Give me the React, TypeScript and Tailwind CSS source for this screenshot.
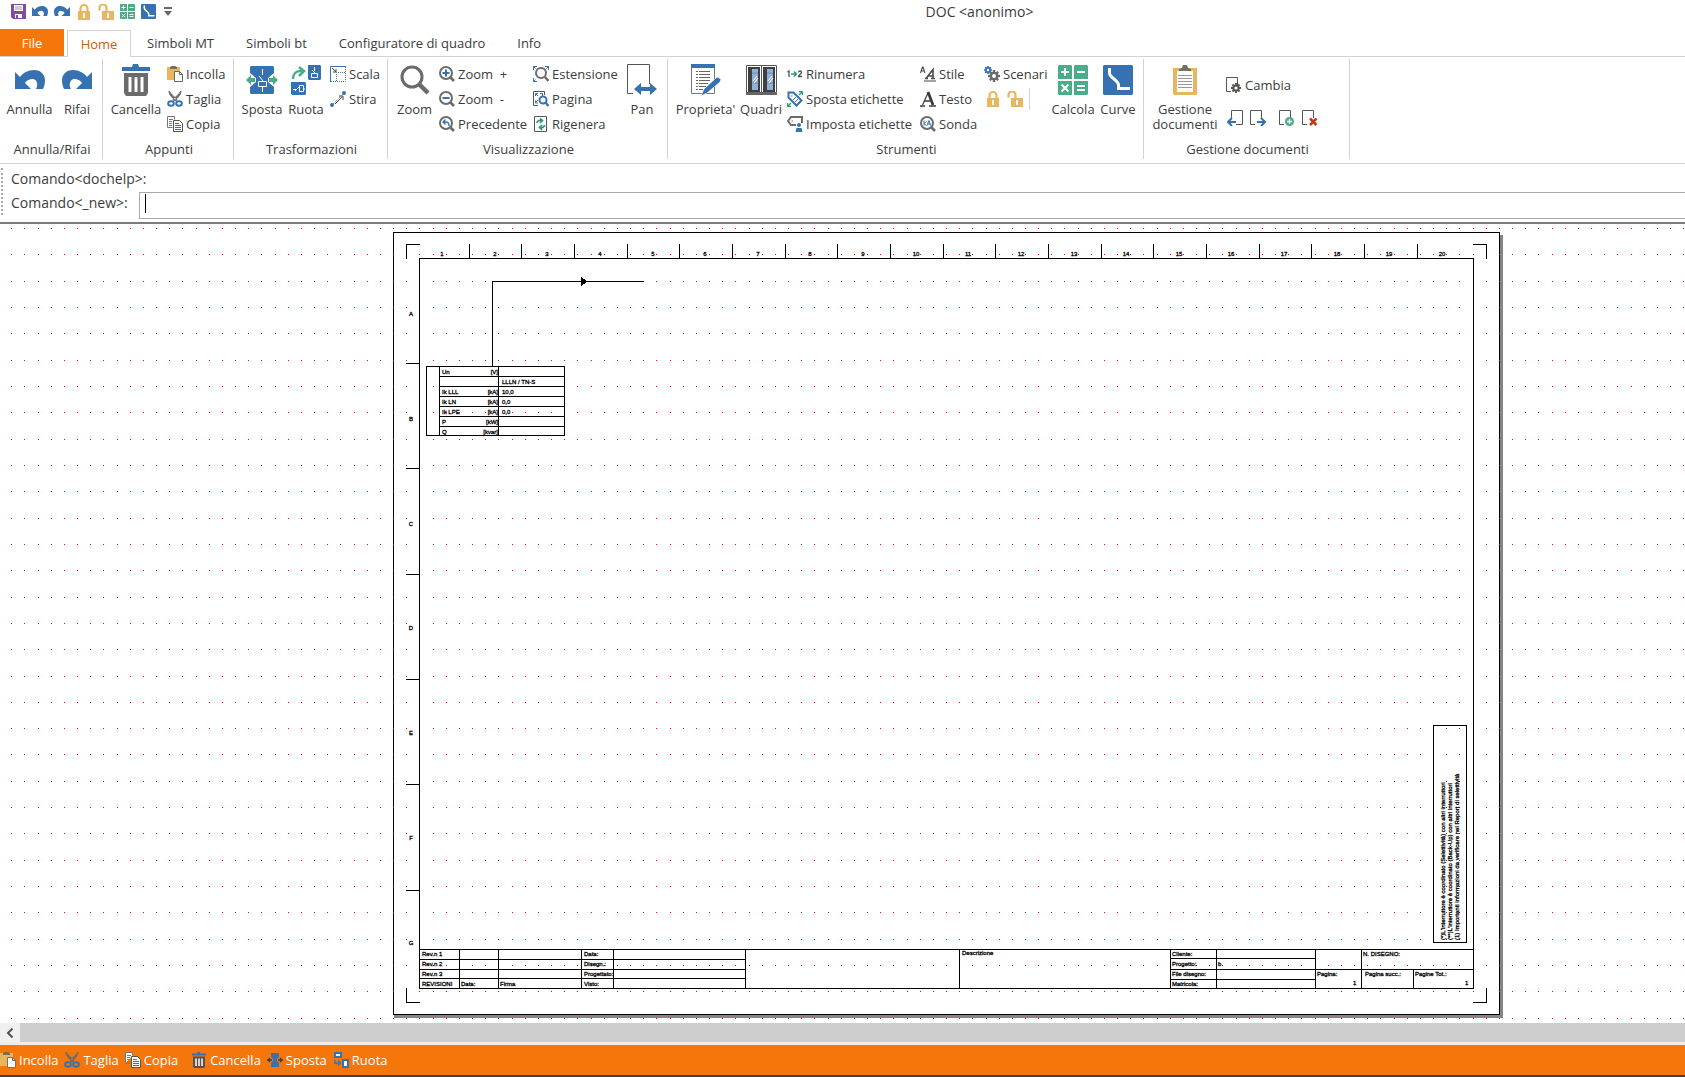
import type { ReactNode } from "react";

const BLUE = "#3672b1";
const GREEN = "#4aad87";
const AMBER = "#e9b55f";
const GREY = "#6b6b6b";

type IconProps = { className?: string };

/* ---------- icons ---------- */

function UndoIcon({ className = "" }: IconProps) {
  return (
    <svg viewBox="0 0 30 20" className={className} fill={BLUE}>
      <path d="M0 2l5 5C8 3 13 0 19 0c7 0 11 5 11 10 0 4-1 7-2 9h-7c2-3 2-9-3-10-4 0-7 2-8 4l6 6H0z" />
    </svg>
  );
}

function RedoIcon({ className = "" }: IconProps) {
  return <UndoIcon className={`-scale-x-100 ${className}`} />;
}

function SaveIcon({ className = "" }: IconProps) {
  return (
    <svg viewBox="0 0 15 15" className={className}>
      <path d="M0 0h15v15H2l-2-2z" fill="#8448a6" />
      <path d="M3 1h9v6H3zM4 10h7v4H4z" fill="#fff" />
      <path d="M4 3h7M4 5h7" stroke="#999" />
      <path d="M5 11h2v3H5z" fill="#8448a6" />
    </svg>
  );
}

function LockIcon({ className = "", open = false }: IconProps & { open?: boolean }) {
  return (
    <svg viewBox="0 0 16 16" className={className}>
      <path d={open ? "M1.500 6.500V4a3.500 3.500 0 0 1 7 0v4" : "M4.500 8V4.500a3.500 3.500 0 0 1 7 0V8"} fill="none" stroke={AMBER} strokeWidth="2.200" />
      <path d={open ? "M4 7h12v9H4z" : "M2 7h12v9H2z"} fill={AMBER} />
      <path d={open ? "M9 9h2v5H9z" : "M7 9h2v5H7z"} fill="#fff" />
    </svg>
  );
}

function CalcIcon({ className = "" }: IconProps) {
  return (
    <svg viewBox="0 0 30 30" className={className}>
      <path d="M1 0h12l1 1v13H0V1zM17 0h12l1 1v13H16V1zM0 16h14v14H1l-1-1zM16 16h14v13l-1 1H16z" fill={GREEN} />
      <path d="M7 3v8M3 7h8M19 7h8M3.500 19.500l7 7M10.500 19.500l-7 7M19 21h8M19 25h8" stroke="#fff" strokeWidth="2" fill="none" />
    </svg>
  );
}

function CurveIcon({ className = "" }: IconProps) {
  return (
    <svg viewBox="0 0 30 30" className={className}>
      <path d="M1 0h28l1 1v28l-1 1H1l-1-1V1z" fill={BLUE} />
      <path d="M6.500 3v5c0 5 9 7 9 12v3.500H27" fill="none" stroke="#fff" strokeWidth="3" />
    </svg>
  );
}

function TrashIcon({ className = "", light = false }: IconProps & { light?: boolean }) {
  return (
    <svg viewBox="0 0 28 32" className={className}>
      <path d="M0 3h10l1-3h5l1 3h11v4H0z" fill={BLUE} />
      <path d="M2 9h24v20l-2 3H4l-2-3z" fill={light ? "#55514e" : GREY} />
      <path d="M8 13v15M14 13v15M20 13v15" stroke="#fff" strokeWidth="3" />
    </svg>
  );
}

function PasteIcon({ className = "", light = false }: IconProps & { light?: boolean }) {
  return (
    <svg viewBox="0 0 16 16" className={className}>
      <path d="M0 1h13v5H7v8H0z" fill={AMBER} />
      <path d="M3 1l2-1h3l2 1v2H3z" fill="#776b62" />
      <path d="M7.500 5.500h5l3 3v7h-8z" fill="#fff" stroke={light ? "#8a6a50" : "#666"} />
      <path d="M12.500 5.500v3h3" fill="none" stroke="#666" />
    </svg>
  );
}

function CutIcon({ className = "" }: IconProps) {
  return (
    <svg viewBox="0 0 16 16" className={className}>
      <path d="M2 0c0 3 2 6 7 10l1-2C7 6 4 3 2 0zM14 0c0 3-2 6-7 10L6 8c3-2 6-5 8-8z" fill={GREY} stroke={GREY} />
      <ellipse cx="4" cy="12.500" rx="2.800" ry="2.300" fill="none" stroke={BLUE} strokeWidth="2" />
      <ellipse cx="12" cy="12.500" rx="2.800" ry="2.300" fill="none" stroke={BLUE} strokeWidth="2" />
    </svg>
  );
}

function CopyIcon({ className = "" }: IconProps) {
  return (
    <svg viewBox="0 0 16 16" className={className}>
      <path d="M.5 11.500V.5h7v3" fill="#fff" stroke="#777" />
      <path d="M.5 11.500h5" stroke="#777" />
      <path d="M2 3.500h4M2 5.500h3M2 7.500h3M2 9.500h3" stroke="#777" />
      <path d="M6.500 4.500h6l3 3v8h-9z" fill="#fff" stroke="#555" />
      <path d="M8 7.500h4M8 9.500h6M8 11.500h6M8 13.500h6" stroke={BLUE} />
    </svg>
  );
}

function MoveIcon({ className = "" }: IconProps) {
  return (
    <svg viewBox="0 0 32 28" className={className}>
      <path d="M5 0h22l1 1v26l-1 1H5l-1-1V1z" fill={BLUE} />
      <path d="M4 7l6 5v4l-6 5zM28 7l-6 5v4l6 5z" fill="#fff" />
      <path d="M0 14l5-5v3h4v4H5v3zM32 14l-5-5v3h-4v4h4v3z" fill={GREEN} />
      <path d="M16.500 3v6M13 10l4 5M12.500 15.500h8v5h-8zM16.500 21v5" fill="none" stroke="#fff" />
    </svg>
  );
}

function RotateIcon({ className = "" }: IconProps) {
  return (
    <svg viewBox="0 0 30 30" className={className}>
      <path d="M17 0h12l1 1v13l-1 1H18l-1-1zM0 17h14l1 1v11l-1 1H1l-1-1z" fill={BLUE} />
      <path d="M23.500 2v4M21 5l3 3M20.500 8.500h6v4h-6zM2 24.500h3M4 26l4-4M8.500 20.500h4v6h-4zM12 24h2" fill="none" stroke="#fff" />
      <path d="M2 14c0-5 3-8 7-8h3M8 2l5 4-5 5" fill="none" stroke={GREEN} strokeWidth="2.500" />
    </svg>
  );
}

function ScaleIcon({ className = "" }: IconProps) {
  return (
    <svg viewBox="0 0 16 16" className={className}>
      <path d="M.5 16V.5H16" fill="none" stroke={BLUE} />
      <path d="M15.500 1v14.500H0" fill="none" stroke={BLUE} strokeDasharray="1 1" />
      <path d="M6.500 15V6.500H15" fill="none" stroke="#666" strokeDasharray="1 1" />
      <path d="M2 2l4 4M6 3v3H3" fill="none" stroke="#444" />
    </svg>
  );
}

function StretchIcon({ className = "" }: IconProps) {
  return (
    <svg viewBox="0 0 16 16" className={className}>
      <path d="M2 14L14 2" stroke="#666" strokeDasharray="1 1" />
      <path d="M5 13l7-7M9 5h4v4" fill="none" stroke="#444" />
      <circle cx="2" cy="14" r="2" fill={BLUE} />
      <circle cx="14" cy="2" r="2" fill={BLUE} />
    </svg>
  );
}

function ZoomIcon({ className = "" }: IconProps) {
  return (
    <svg viewBox="0 0 30 30" className={className} fill="none" stroke={GREY}>
      <circle cx="12" cy="12" r="10" strokeWidth="3" />
      <path d="M19.500 19.500L28 28" strokeWidth="4.500" />
    </svg>
  );
}

function SmallZoom({ className = "", children }: IconProps & { children?: ReactNode }) {
  return (
    <svg viewBox="0 0 16 16" className={className} fill="none">
      <circle cx="7" cy="7" r="6" stroke={GREY} strokeWidth="2" />
      <path d="M11.500 11.500L15 15" stroke={GREY} strokeWidth="2.600" />
      {children}
    </svg>
  );
}

function ExtentsIcon({ className = "" }: IconProps) {
  return (
    <svg viewBox="0 0 16 16" className={className} fill="none">
      <circle cx="8" cy="7" r="5" stroke={GREY} strokeWidth="2" />
      <path d="M12 11l3.500 4" stroke={GREY} strokeWidth="2.500" />
      <path d="M.5 4V.5H4M.5 .5l2 2M12 .5h3.500V4M15.500 .5l-2 2M.5 12v3.500H4M.5 15.500l2-2" stroke={BLUE} />
    </svg>
  );
}

function PageZoomIcon({ className = "" }: IconProps) {
  return (
    <svg viewBox="0 0 16 16" className={className} fill="none">
      <path d="M5 14.500H.5V.5h11V4" stroke="#555" />
      <path d="M2.500 5V2.500H5M7 2.500h2.500V5M2.500 9.500V12H5M3 3l2 2M3 11l2-2" stroke={BLUE} />
      <circle cx="10" cy="9" r="3.500" stroke={BLUE} strokeWidth="2" fill="#fff" />
      <path d="M12.500 11.500L15.500 15" stroke={BLUE} strokeWidth="2.400" />
    </svg>
  );
}

function RegenIcon({ className = "" }: IconProps) {
  return (
    <svg viewBox="0 0 16 16" className={className} fill="none">
      <path d="M1.500 .5h12v15h-12z" stroke="#555" />
      <path d="M4 7c0-2 2-3 5-2.500M7 2.500l2.500 2L7 7M11.500 9c0 2-2 3-5 2.500M9 9l-2.500 2.500L9 14" stroke="#2f9c6c" strokeWidth="1.700" />
    </svg>
  );
}

function PanIcon({ className = "" }: IconProps) {
  return (
    <svg viewBox="0 0 30 32" className={className}>
      <path d="M6 29.500H.5V.5h22V20" fill="none" stroke="#555" />
      <path d="M7 25l7-6v4h9v-4l7 6-7 6v-4h-9v4z" fill={BLUE} />
    </svg>
  );
}

function PropertiesIcon({ className = "" }: IconProps) {
  return (
    <svg viewBox="0 0 30 32" className={className}>
      <path d="M.5 4v25.500h23V4" fill="#fff" stroke="#777" />
      <path d="M0 0h24v4H0z" fill={BLUE} />
      <path d="M5 7.500h2m1 0h11M5 10.500h2m1 0h11M5 13.500h2m1 0h11M5 16.500h2m1 0h11M5 19.500h2m1 0h9M5 22.500h2m1 0h7M5 25.500h2m1 0h4" stroke="#666" />
      <path d="M10 32l3-7L26 13l4 2-1 3-13 11z" fill={BLUE} stroke="#fff" strokeWidth=".6" />
    </svg>
  );
}

function PanelsIcon({ className = "" }: IconProps) {
  return (
    <svg viewBox="0 0 31 30" className={className}>
      <path d="M.5 .5h30v29H.5zM15.500 0v28" fill="#fff" stroke="#555" />
      <path d="M2 2h12v25H2zM17 2h12v25H17z" fill="#3f3f3f" />
      <path d="M6 4h6v21H6zM21 4h6v21h-6z" fill="#8fb1d6" />
      <path d="M6 8h6M21 8h6M6 18h6M21 18h6" stroke="#6d93bd" />
      <path d="M7 16l4-5M8 18l4-5M22 16l4-5M23 18l4-5" stroke="#fff" />
      <path d="M0 27h31v3H0z" fill="#666" />
    </svg>
  );
}

function RenumberIcon({ className = "" }: IconProps) {
  return (
    <svg viewBox="0 0 16 16" className={className} fill="none">
      <path d="M.5 6L2 5v6M11.500 6.500c0-2 3-2 3 0 0 1.500-3 2.500-3 4H15" stroke="#44525e" strokeWidth="1.300" />
      <path d="M4 8h5M7 5.500L9.500 8 7 10.500" stroke="#2f9c6c" strokeWidth="1.600" />
    </svg>
  );
}

function TagMoveIcon({ className = "" }: IconProps) {
  return (
    <svg viewBox="0 0 16 16" className={className} fill="none">
      <path d="M1.500 1.500h5l8 8-5 5-8-8z" stroke={BLUE} strokeWidth="2" />
      <path d="M4 5h1.500M6 9l3-3M8 11l3-3" stroke={BLUE} />
      <path d="M12 .5h3.500V4M15 1l-3 3M.5 12v3.500H4M1 15l3-3" stroke="#2f9c6c" strokeWidth="1.300" />
    </svg>
  );
}

function TagSetIcon({ className = "" }: IconProps) {
  return (
    <svg viewBox="0 0 16 16" className={className} fill="none">
      <path d="M9 9H4L1 5l3-4h11v6" stroke={GREY} strokeWidth="2" />
      <path d="M4.500 5h1.500" stroke={GREY} />
      <circle cx="12" cy="9" r="2" fill={BLUE} />
      <path d="M8.500 16l1-4h5l1 4z" fill={BLUE} />
    </svg>
  );
}

function StyleIcon({ className = "" }: IconProps) {
  return (
    <svg viewBox="0 0 16 16" className={className} fill="none" stroke="#4b4b4b">
      <path d="M.5 7l2-6h.500l2 6M1 5h3" strokeWidth="1.100" />
      <path d="M6 12.500l7-9v9M8 10h5M5 12.500h3M11 12.500h4" strokeWidth="1.600" />
      <path d="M4 15h12" />
    </svg>
  );
}

function TextIcon({ className = "" }: IconProps) {
  return (
    <svg viewBox="0 0 16 16" className={className} fill="none" stroke="#3c3c3c">
      <path d="M2.500 14L8 2" strokeWidth="1.200" />
      <path d="M8 1l5 13" strokeWidth="2.800" />
      <path d="M4 10h6M0 15h5M9 15h7" strokeWidth="1.400" />
    </svg>
  );
}

function Gear({ x, y, r, color, hole = "#fff" }: { x: number; y: number; r: number; color: string; hole?: string }) {
  return (
    <g transform={`translate(${x} ${y})`}>
      {[0, 45, 90, 135].map((a) => (
        <path key={a} d={`M0 ${-r}V${r}`} stroke={color} strokeWidth={r / 2.5} transform={`rotate(${a})`} />
      ))}
      <circle r={r * 0.72} fill={color} />
      <circle r={r * 0.32} fill={hole} />
    </g>
  );
}

function ScenariosIcon({ className = "" }: IconProps) {
  return (
    <svg viewBox="0 0 16 16" className={className}>
      <Gear x={4} y={4} r={4} color={BLUE} />
      <Gear x={10} y={10} r={6} color={GREY} />
    </svg>
  );
}

function ClipboardIcon({ className = "" }: IconProps) {
  return (
    <svg viewBox="0 0 24 30" className={className}>
      <path d="M0 3h24v26l-1 1H1l-1-1z" fill={AMBER} />
      <path d="M4 6h16v21H4z" fill="#fff" />
      <path d="M6 4l3-1 1-3h4l1 3 3 1v2H6z" fill="#6f6f6f" />
      <path d="M5 10.500h14M5 13.500h14M5 16.500h14M5 19.500h14M5 22.500h14" stroke="#999" />
    </svg>
  );
}

function DocIcon({ className = "", children, side = "left" }: IconProps & { children: ReactNode; side?: "left" | "right" }) {
  return (
    <svg viewBox="0 0 16 16" className={className} fill="none">
      <path d={side === "left" ? "M5 14.500H.5V.5h11V8" : "M4.500 8V.5h11v14H9"} stroke="#555" />
      {children}
    </svg>
  );
}

function MoveFlatIcon({ className = "" }: IconProps) {
  return (
    <svg viewBox="0 0 16 16" className={className}>
      <path d="M4 1h8v4l-2 2v2l2 2v4H4v-4l2-2V7L4 5z" fill={BLUE} />
      <path d="M0 8h5M3 6L1 8l2 2M16 8h-5M13 6l2 2-2 2" stroke="#3a4046" strokeWidth="1.300" fill="none" />
    </svg>
  );
}

function RotateFlatIcon({ className = "" }: IconProps) {
  return (
    <svg viewBox="0 0 16 16" className={className}>
      <path d="M1 0h8v6H1zM9 7h7v9H9z" fill={BLUE} />
      <path d="M3 2h4v2H3zM11 9h3v5h-3z" fill="#fff" />
      <path d="M2 8v3h4M5 8.500L7.500 11 5 13.500" stroke={BLUE} strokeWidth="1.500" fill="none" />
    </svg>
  );
}

/* ---------- ribbon ---------- */

function Group({ title, className, children }: { title: string; className: string; children: ReactNode }) {
  return (
    <section className={`flex shrink-0 flex-col border-r border-[#d2d2d2] pl-[5px] ${className}`}>
      <div className="flex h-[80px] items-start">{children}</div>
      <h2 className="pr-[3px] text-center leading-5">{title}</h2>
    </section>
  );
}

function BigButton({ label, className, children }: { label: string; className: string; children: ReactNode }) {
  return (
    <button type="button" className={`flex shrink-0 flex-col items-center pt-[5px] ${className}`}>
      <span className="flex h-8 items-center justify-center">{children}</span>
      <span className="mt-[6px] text-center leading-[15px] whitespace-pre">{label}</span>
    </button>
  );
}

function SmallButton({ label, children }: { label: string; children: ReactNode }) {
  return (
    <button type="button" className="flex h-[25px] items-center gap-[3px] pl-[3px] whitespace-pre">
      {children}
      {label}
    </button>
  );
}

function Column({ className = "", children }: { className?: string; children: ReactNode }) {
  return <div className={`flex shrink-0 flex-col items-start pt-[2px] ${className}`}>{children}</div>;
}

function QuickAccess() {
  return (
    <div className="flex h-[29px] items-center">
      <div className="flex w-[274px] items-center gap-[6px] pb-[6px] pl-[11px]">
        <button type="button" aria-label="Salva"><SaveIcon className="size-[15px]" /></button>
        <button type="button" aria-label="Annulla"><UndoIcon className="w-4" /></button>
        <button type="button" aria-label="Rifai"><RedoIcon className="w-4" /></button>
        <button type="button" aria-label="Blocca"><LockIcon className="size-4" /></button>
        <button type="button" aria-label="Sblocca"><LockIcon open className="size-4" /></button>
        <button type="button" aria-label="Calcola"><CalcIcon className="size-[15px]" /></button>
        <button type="button" aria-label="Curve"><CurveIcon className="size-[15px]" /></button>
        <button type="button" aria-label="Personalizza">
          <svg viewBox="0 0 8 9" className="ml-[2px] h-[9px] w-2"><path d="M0 0h8v2H0zM0 4h8L4 9z" fill={GREY} /></svg>
        </button>
      </div>
      <h1 className="flex-1 pb-[6px] text-center text-[14px]">DOC &lt;anonimo&gt;</h1>
    </div>
  );
}

const TABS = ["Simboli MT", "Simboli bt", "Configuratore di quadro", "Info"];

function Tabs() {
  return (
    <nav className="flex h-7 border-b border-[#d2d2d2]">
      <button type="button" className="w-16 bg-[#f5770b] text-white">File</button>
      <button type="button" className="ml-[3px] -mb-px mt-px w-16 border border-b-0 border-[#d2d2d2] bg-white text-[#c8600a]">Home</button>
      {TABS.map((tab) => (
        <button type="button" key={tab} className="px-4">{tab}</button>
      ))}
    </nav>
  );
}

function Ribbon() {
  return (
    <div className="flex border-b border-[#d2d2d2] pt-[2px] pb-1">
      <Group title="Annulla/Rifai" className="w-[103px]">
        <BigButton label="Annulla" className="w-[49px]"><UndoIcon className="w-[30px]" /></BigButton>
        <BigButton label="Rifai" className="w-[46px]"><RedoIcon className="w-[30px]" /></BigButton>
      </Group>
      <Group title="Appunti" className="w-[131px]">
        <BigButton label="Cancella" className="w-[56px]"><TrashIcon className="h-8 w-7" /></BigButton>
        <Column>
          <SmallButton label="Incolla"><PasteIcon className="size-4" /></SmallButton>
          <SmallButton label="Taglia"><CutIcon className="size-4" /></SmallButton>
          <SmallButton label="Copia"><CopyIcon className="size-4" /></SmallButton>
        </Column>
      </Group>
      <Group title="Trasformazioni" className="w-[154px]">
        <BigButton label="Sposta" className="w-[46px]"><MoveIcon className="h-7 w-8" /></BigButton>
        <BigButton label="Ruota" className="w-[42px]"><RotateIcon className="size-[30px]" /></BigButton>
        <Column>
          <SmallButton label="Scala"><ScaleIcon className="size-4" /></SmallButton>
          <SmallButton label="Stira"><StretchIcon className="size-4" /></SmallButton>
        </Column>
      </Group>
      <Group title="Visualizzazione" className="w-[280px]">
        <BigButton label="Zoom" className="w-[43px]"><ZoomIcon className="size-[30px]" /></BigButton>
        <Column className="w-[94px]">
          <SmallButton label="Zoom  +">
            <SmallZoom className="size-4"><path d="M7 3.500v7M3.500 7h7" stroke={BLUE} strokeWidth="2" /></SmallZoom>
          </SmallButton>
          <SmallButton label="Zoom  -">
            <SmallZoom className="size-4"><path d="M3.500 7h7" stroke={BLUE} strokeWidth="2" /></SmallZoom>
          </SmallButton>
          <SmallButton label="Precedente">
            <SmallZoom className="size-4"><path d="M6.500 3.500L4 6l2.500 2.500M4 6h3c2 0 3 1 3 4" stroke={BLUE} strokeWidth="1.400" /></SmallZoom>
          </SmallButton>
        </Column>
        <Column className="w-[95px]">
          <SmallButton label="Estensione"><ExtentsIcon className="size-4" /></SmallButton>
          <SmallButton label="Pagina"><PageZoomIcon className="size-4" /></SmallButton>
          <SmallButton label="Rigenera"><RegenIcon className="size-4" /></SmallButton>
        </Column>
        <BigButton label="Pan" className="w-[34px]"><PanIcon className="h-8 w-[30px]" /></BigButton>
      </Group>
      <Group title="Strumenti" className="w-[476px]">
        <BigButton label="Proprieta'" className="w-[65px]"><PropertiesIcon className="h-8 w-[30px]" /></BigButton>
        <BigButton label="Quadri" className="w-[46px]"><PanelsIcon className="h-[30px] w-[31px]" /></BigButton>
        <Column className="w-[133px]">
          <SmallButton label="Rinumera"><RenumberIcon className="size-4" /></SmallButton>
          <SmallButton label="Sposta etichette"><TagMoveIcon className="size-4" /></SmallButton>
          <SmallButton label="Imposta etichette"><TagSetIcon className="size-4" /></SmallButton>
        </Column>
        <Column className="w-[64px]">
          <SmallButton label="Stile"><StyleIcon className="size-4" /></SmallButton>
          <SmallButton label="Testo"><TextIcon className="size-4" /></SmallButton>
          <SmallButton label="Sonda">
            <SmallZoom className="size-4"><path d="M4 4.500v5M6.500 5.500L4 7.500l2.500 2M7 9.500l2-5 1.500 5M7.500 8h3" stroke={BLUE} /></SmallZoom>
          </SmallButton>
        </Column>
        <Column className="w-[69px]">
          <SmallButton label="Scenari"><ScenariosIcon className="size-4" /></SmallButton>
          <div className="flex h-[25px] items-center gap-[6px] pl-1">
            <button type="button" aria-label="Blocca"><LockIcon className="size-4" /></button>
            <button type="button" aria-label="Sblocca"><LockIcon open className="size-4" /></button>
            <span className="h-[22px] w-px bg-[#d2d2d2]" />
          </div>
        </Column>
        <BigButton label="Calcola" className="w-[46px]"><CalcIcon className="size-[30px]" /></BigButton>
        <BigButton label="Curve" className="w-[44px]"><CurveIcon className="size-[30px]" /></BigButton>
      </Group>
      <Group title="Gestione documenti" className="w-[206px]">
        <BigButton label={"Gestione\ndocumenti"} className="w-[72px]"><ClipboardIcon className="h-[30px] w-6" /></BigButton>
        <Column>
          <div className="flex h-[47px] items-center pl-[2px]">
            <SmallButton label="Cambia">
              <DocIcon className="size-4"><Gear x={10} y={11} r={5} color="#555" /></DocIcon>
            </SmallButton>
          </div>
          <div className="flex pt-[2px] pl-[6px]">
            <button type="button" aria-label="Documento precedente" className="mr-[7px]">
              <DocIcon side="right" className="size-4"><path d="M9 12H1M5 8l-4 4 4 4" stroke={BLUE} strokeWidth="2" /></DocIcon>
            </button>
            <button type="button" aria-label="Documento successivo" className="mr-[13px]">
              <DocIcon className="size-4"><path d="M7 12h8M11 8l4 4-4 4" stroke={BLUE} strokeWidth="2" /></DocIcon>
            </button>
            <button type="button" aria-label="Aggiungi documento" className="mr-[7px]">
              <DocIcon className="size-4">
                <circle cx="10.500" cy="11.500" r="4.500" fill={GREEN} />
                <path d="M10.500 9v5M8 11.500h5" stroke="#fff" strokeWidth="1.300" />
              </DocIcon>
            </button>
            <button type="button" aria-label="Elimina documento">
              <DocIcon className="size-4"><path d="M8 8.500l6.500 6.500M14.500 8.500L8 15" stroke="#c23a1c" strokeWidth="2.600" /></DocIcon>
            </button>
          </div>
        </Column>
      </Group>
    </div>
  );
}

function CommandLine() {
  return (
    <div className="flex border-b-2 border-[#7c7c7c] pt-[3px] pb-[3px] pl-px text-[14px]">
      <div className="mt-px h-[47px] border-l-2 border-dotted border-[#a8a8a8]" />
      <div className="ml-2 flex-1">
        <p className="pb-px leading-6">Comando&lt;dochelp&gt;:</p>
        <div className="flex items-start">
          <label htmlFor="comando" className="w-32 leading-[21px]">Comando&lt;_new&gt;:</label>
          <div className="flex h-[27px] flex-1 items-start border border-r-0 border-[#a9a9a9] pt-px pl-[5px]">
            <span className="h-[19px] w-px bg-black" />
            <input id="comando" type="text" className="h-full flex-1 outline-none" />
          </div>
        </div>
      </div>
    </div>
  );
}

/* ---------- drawing sheet ---------- */

// grid points, drawn as single pixels
const gridPath = Array.from({ length: 31 }, (_, row) =>
  Array.from({ length: 190 }, (_, col) => `M${Math.floor(11.8 + col * 13.165)} ${Math.floor(3.4 + row * 26.33)}h1v1h-1z`).join(""),
).join("");

const ROWS = ["A", "B", "C", "D", "E", "F", "G"];

const NET_DATA = [
  ["Un", "[V]", ""],
  ["", "", "LLLN / TN-S"],
  ["Ik LLL", "[kA]", "10,0"],
  ["Ik LN", "[kA]", "0,0"],
  ["Ik LPE", "[kA]", "0,0"],
  ["P", "[kW]", ""],
  ["Q", "[kvar]", ""],
];

const TITLE_BLOCK: [number, number, string][] = [
  [422, 731, "Rev.n 1"],
  [422, 741, "Rev.n 2"],
  [422, 751, "Rev.n 3"],
  [422, 761, "REVISIONI"],
  [461, 761, "Data:"],
  [500, 761, "Firma"],
  [584, 731, "Data:"],
  [584, 741, "Disegn.:"],
  [584, 751, "Progettato:"],
  [584, 761, "Visto:"],
  [962, 730, "Descrizione"],
  [1172, 731, "Cliente:"],
  [1172, 741, "Progetto:"],
  [1218, 741, "b"],
  [1172, 751, "File disegno:"],
  [1172, 761, "Matricola:"],
  [1317, 751, "Pagina:"],
  [1353, 760, "1"],
  [1363, 731, "N. DISEGNO:"],
  [1365, 751, "Pagina succ.:"],
  [1415, 751, "Pagine Tot.:"],
  [1465, 760, "1"],
];

const NOTES = [
  "(*)L'interruttore è coordinato (Selettività) con altri interruttori",
  "(**)L'interruttore è coordinato (Back-Up) con altri interruttori",
  "(1) Importanti informazioni da verificare nel Report di selettività",
];

function Drawing() {
  return (
    <svg className="block h-full w-full" shapeRendering="crispEdges">
      <path d="M1500 10h3v783H394v-3h1106z" fill="#858585" />
      <path d="M393.500 7.500h1106v782h-1106z" fill="#fff" stroke="#000" />
      <path d={gridPath} fill="#f00000" />

      <g fill="none" stroke="#000">
        <path d="M406.500 34V19.500H420M1473 19.500h13.500V34M406.500 763v14.500H420M1473 777.500h13.500V763" />
        <path d="M419.500 33.500h1054v730h-1054z" />
        {Array.from({ length: 19 }, (_, i) => (
          <path key={i} d={`M${Math.floor(469.2 + i * 52.67) + 0.5} 19v14`} />
        ))}
        {Array.from({ length: 6 }, (_, i) => (
          <path key={i} d={`M406 ${Math.round(138 + i * 105.3) + 0.5}h13`} />
        ))}
        {/* supply line */}
        <path d="M492.500 141V56.500H644" />
        <path d="M581 52v9l7-4.500z" fill="#000" stroke="none" />
        {/* network data table */}
        <path d="M426.500 141.500h138v69h-138zM439.500 141v69M498.500 141v69M439 151.500h125M439 161.500h125M439 171.500h125M439 181.500h125M439 191.500h125M439 201.500h125" />
        {/* notes */}
        <path d="M1433.500 500.500h33v217h-33z" />
        {/* title block */}
        <path d="M419 724.500h1054M419 734.500h326M419 744.500h326M419 753.500h326M459.500 724v39M498.500 724v39M581.500 724v39M613.500 724v39M745.500 724v39M959.500 724v39" />
        <path d="M1170.500 724v39M1216.500 724v39M1315.500 724v39M1361.500 724v39M1413.500 744v19M1170 733.500h145M1170 744.500h303M1170 754.500h145" />
      </g>

      <g className="font-['Liberation_Sans'] text-[6px]" stroke="#000" strokeWidth=".3">
        {Array.from({ length: 20 }, (_, i) => (
          <text key={i} x={Math.round(442 + i * 52.63)} y="31" textAnchor="middle">{i + 1}</text>
        ))}
        {ROWS.map((row, i) => (
          <text key={row} x="411" y={Math.round(91 + i * 104.8)} textAnchor="middle">{row}</text>
        ))}
        {NET_DATA.map(([name, unit, value], i) => (
          <g key={i}>
            <text x="442" y={149 + i * 10}>{name}</text>
            <text x="498" y={149 + i * 10} textAnchor="end">{unit}</text>
            <text x="502" y={149 + i * 10}>{value}</text>
          </g>
        ))}
        {TITLE_BLOCK.map(([x, y, text]) => (
          <text key={`${x}-${y}`} x={x} y={y}>{text}</text>
        ))}
        {NOTES.map((note, i) => (
          <text key={i} transform={`translate(${1445 + i * 7} 715) rotate(-90)`}>{note}</text>
        ))}
      </g>
    </svg>
  );
}

function StatusBar() {
  return (
    <footer className="flex h-8 shrink-0 items-center border-b-2 border-[#3d4248] bg-[#f5770b] text-white">
      <button type="button" className="mr-[6px] flex items-center gap-[3px]"><PasteIcon light className="size-4" />Incolla</button>
      <button type="button" className="mr-[6px] flex items-center gap-[3px]"><CutIcon className="size-4" />Taglia</button>
      <button type="button" className="mr-[13px] flex items-center gap-[3px]"><CopyIcon className="size-4" />Copia</button>
      <button type="button" className="mr-[6px] flex items-center gap-[3px]"><TrashIcon light className="size-4" />Cancella</button>
      <button type="button" className="mr-[6px] flex items-center gap-[3px]"><MoveFlatIcon className="size-4" />Sposta</button>
      <button type="button" className="flex items-center gap-[3px]"><RotateFlatIcon className="size-4" />Ruota</button>
    </footer>
  );
}

export default function App() {
  return (
    <div className="flex h-screen flex-col overflow-hidden bg-white font-['Open_Sans','Noto_Sans',sans-serif] text-[13px] leading-5 text-[#3c3c3c]">
      <QuickAccess />
      <Tabs />
      <Ribbon />
      <CommandLine />
      <main className="min-h-0 flex-1 overflow-hidden pt-px">
        <Drawing />
      </main>
      <div className="flex h-[22px] shrink-0 border-b-[3px] border-[#ececec] bg-[#cdcdcd]">
        <button type="button" aria-label="Scorri a sinistra" className="flex w-5 items-center justify-center bg-[#f0f0f0]">
          <svg viewBox="0 0 8 10" className="h-[10px] w-2" fill="none"><path d="M6.500 .5L2 5l4.500 4.500" stroke="#505050" strokeWidth="2" /></svg>
        </button>
      </div>
      <StatusBar />
    </div>
  );
}
